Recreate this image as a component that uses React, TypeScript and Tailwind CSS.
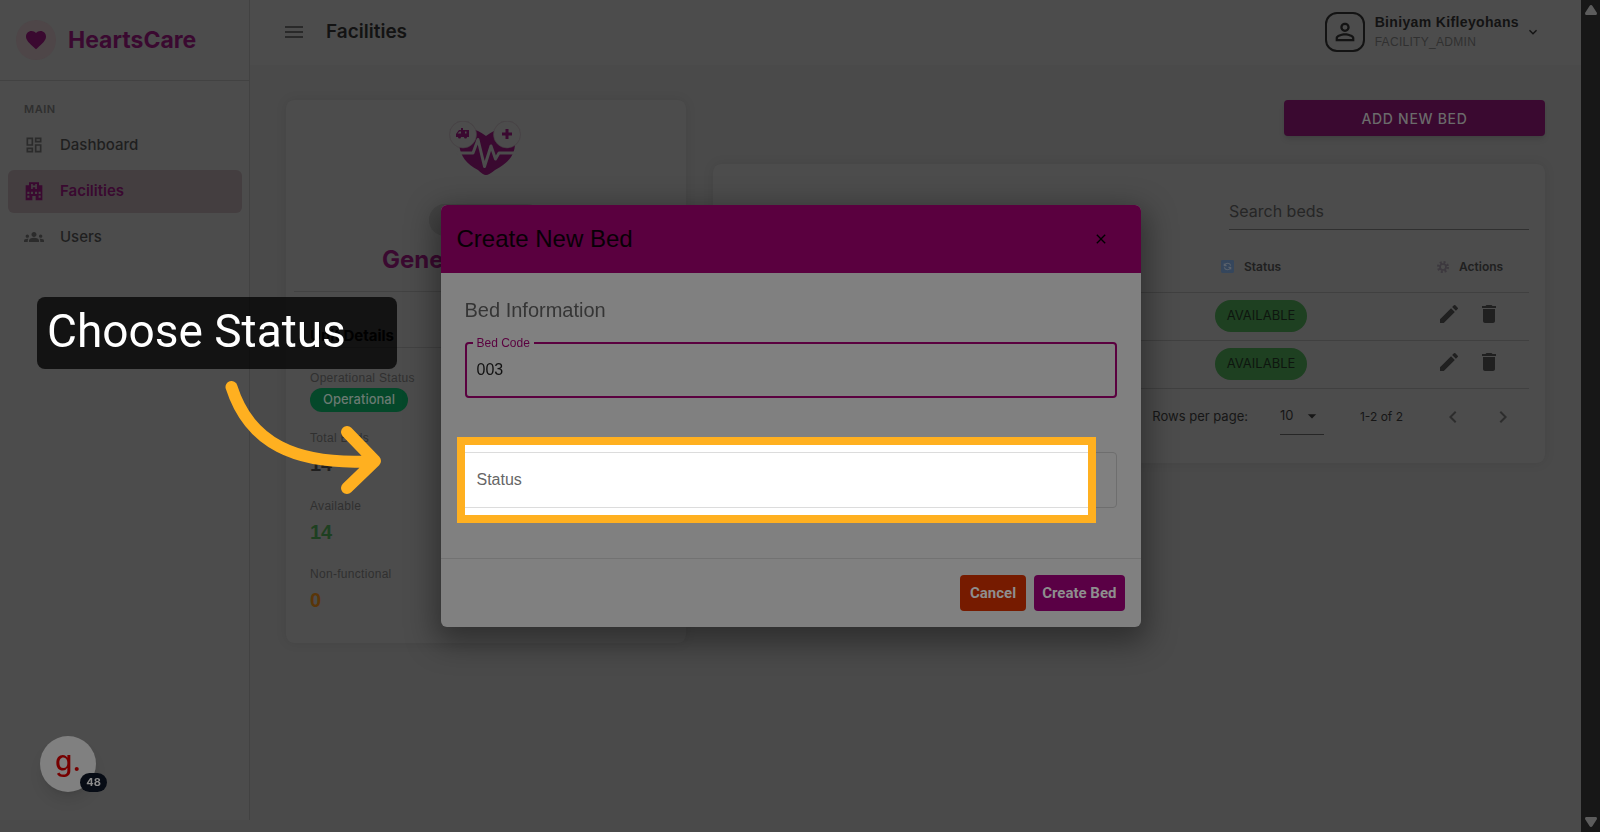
import { useState } from 'react'
import {
  MdClose,
  MdDelete,
  MdEdit,
  MdFavorite,
  MdGroups,
  MdKeyboardArrowDown,
  MdMenu,
  MdOutlineDashboard,
  MdPersonOutline,
  MdChevronLeft,
  MdChevronRight,
  MdArrowDropDown,
} from 'react-icons/md'
import { clsx } from 'clsx'

const HospitalIcon = () => (
  <svg viewBox="0 0 24 24" className="size-5" fill="currentColor">
    <path
      fillRule="evenodd"
      d="M18 5V1.500H6V5H2v18h8v-5h4v5h8V5zM6.500 20H4V17.500h2.500zM6.500 15.500H4V13h2.500zM10.800 15.500H8.300V13h2.500zM15.700 15.500h-2.500V13h2.500zM20 20h-2.500v-2.500H20zM20 15.500h-2.500V13H20zM8.500 3.500h2v2h3v-2h2v6h-2v-2h-3v2h-2z"
    />
  </svg>
)

const menu = [
  { name: 'Dashboard', icon: <MdOutlineDashboard className="size-5" /> },
  { name: 'Facilities', icon: <HospitalIcon /> },
  { name: 'Users', icon: <MdGroups className="size-5" /> },
]

const stats = [
  { label: 'Total Beds', value: '14', color: 'text-[#1f1f1f]' },
  { label: 'Available', value: '14', color: 'text-[#1e4021]' },
  { label: 'Non-functional', value: '0', color: 'text-[#5a3508]' },
]

function Sidebar() {
  return (
    <aside className="mb-3 w-[250px] shrink-0 border-r border-[#424242] bg-[#4c4c4c]">
      <div className="flex h-[81px] items-center gap-3 border-b border-[#424242] px-4">
        <span className="flex size-10 items-center justify-center rounded-full bg-[#4e4648]">
          <MdFavorite className="size-6 text-[#3a0930]" />
        </span>
        <span className="text-[23px] font-bold text-[#3a0930]">HeartsCare</span>
      </div>
      <p className="px-6 pt-5 text-[11px] leading-4 font-semibold tracking-wider text-[#2f2f2f]">MAIN</p>
      <nav className="mt-[7px] flex flex-col gap-[3px] pr-[7px] pl-2">
        {menu.map((item) => (
          <a
            key={item.name}
            href="#"
            className={clsx(
              'flex h-[43px] items-center gap-4 rounded-md px-4 text-[15px]',
              item.name === 'Facilities'
                ? 'bg-[#443e40] font-semibold text-[#3a0930]'
                : 'font-medium text-[#1f1f1f]'
            )}
          >
            <span className={clsx('pb-0.5', item.name !== 'Facilities' && 'text-[#2b2b2b]')}>{item.icon}</span>
            {item.name}
          </a>
        ))}
      </nav>
    </aside>
  )
}

function Header() {
  return (
    <header className="flex h-[65px] items-center bg-[#4c4c4c] pr-10 pb-0.5 pl-8">
      <button aria-label="Toggle menu" className="text-[#292929]">
        <MdMenu className="size-6" />
      </button>
      <h1 className="ml-5 pt-0.5 text-[19px] font-semibold text-[#131313]">Facilities</h1>
      <button className="ml-auto flex items-center text-left font-['Liberation_Sans',Arial,sans-serif]">
        <span className="flex size-10 items-center justify-center rounded-xl border-2 border-[#131313]">
          <MdPersonOutline className="size-7 text-[#131313]" />
        </span>
        <span className="ml-2.5 flex flex-col">
          <span className="text-[14px] leading-5 font-bold tracking-wide text-[#131313]">Biniyam Kifleyohans</span>
          <span className="text-[12px] leading-5 tracking-wide text-[#303030]">FACILITY_ADMIN</span>
        </span>
        <MdKeyboardArrowDown className="ml-1.5 size-4 text-[#131313]" />
      </button>
    </header>
  )
}

function HeartBeat() {
  return (
    <svg width="74" height="58" viewBox="0 0 74 58" fill="none">
      <path
        d="M10 22C10 12 20 6 29 10Q33 12 37 15Q41 12 45 10C55 6 66 12 66 22C66 36 57 43 46 49Q40 54 37 54Q34 54 29 49C18 43 11 36 10 22Z"
        fill="#3a0930"
      />
      <path
        d="M9 32H24L29 18.500L35.500 45.500L42 25L46.500 38L50 32H66"
        stroke="#4c4c4c"
        strokeWidth="3"
        strokeLinecap="round"
        strokeLinejoin="round"
      />
      <circle cx="14" cy="13.500" r="13.500" fill="#4c4c4c" stroke="#443c42" strokeWidth="0.600" />
      <circle cx="58" cy="13.500" r="13.500" fill="#4c4c4c" stroke="#443c42" strokeWidth="0.600" />
      <path d="M58 8V18M53 13H63" stroke="#3a0930" strokeWidth="3" />
      <path d="M7 13L10 9H12V7H14V9H20V16H18A1.500 1.500 0 0 1 15 16H12A1.500 1.500 0 0 1 9 16H7Z" fill="#3a0930" />
      <path d="M8.500 12.500L10.500 10.500H12V12.500ZM16 10.500H17.500V12.500H16Z" fill="#4c4c4c" />
    </svg>
  )
}

function FacilityCard() {
  return (
    <section className="h-[543px] rounded-lg bg-[#4c4c4c] px-2 shadow-[0_0_12px_#00000014]">
      <div className="flex flex-col items-center pt-[21px]">
        <HeartBeat />
        <div className="mt-[25px] h-8 w-[114px] rounded-full bg-[#444444]" />
      </div>
      <h2 className="mt-1 pl-[88px] text-[24px] leading-[40px] font-bold text-[#3a0930]">General</h2>
      <div className="mt-[11px] border-y border-[#424242] pt-8 pl-4">
        <h3 className="text-[15px] leading-[23px] font-bold text-black">Unit Details</h3>
      </div>
      <div className="px-4 pt-5 font-['Liberation_Sans',Arial,sans-serif]">
        <p className="text-[12px] leading-5 tracking-wide text-[#303030]">Operational Status</p>
        <span className="flex h-6 w-[98px] items-center justify-center rounded-full bg-[#05482a] font-[Inter,sans-serif] text-[13px] font-medium text-[#6a7a72]">
          Operational
        </span>
        {stats.map((stat) => (
          <div key={stat.label} className="pt-4">
            <p className="text-[12px] leading-5 tracking-wide text-[#303030]">{stat.label}</p>
            <p className={clsx('text-[20px] leading-8 font-bold', stat.color)}>{stat.value}</p>
          </div>
        ))}
      </div>
    </section>
  )
}

function BedsTable() {
  return (
    <section className="mt-7 h-[299px] rounded-lg bg-[#4c4c4c] px-4 pt-7 shadow-[0_0_12px_#00000014]">
      <input
        type="search"
        aria-label="Search beds"
        placeholder="Search beds"
        className="ml-auto block h-[38px] w-[300px] border-b border-[#303030] text-[16px] outline-none placeholder:text-[#262626]"
      />
      <table className="w-full table-fixed text-left">
        <thead>
          <tr className="h-[62px] border-b border-[#404040] text-[12px] text-[#202020]">
            <th />
            <th className="w-[200px] pt-3 pl-2 font-semibold">
              <span className="flex items-center gap-2.5">
                <svg viewBox="0 0 14 14" className="size-[13px]">
                  <rect width="14" height="14" rx="1.500" fill="#35465c" />
                  <path
                    d="M3.500 6.500V3.800M3.500 6H6M4 5.500A3.500 3.500 0 0 1 10.500 6M10.500 7.500V10.200M10.500 8H8M10 8.500A3.500 3.500 0 0 1 3.500 8"
                    stroke="#5a626c"
                    strokeWidth="1.200"
                    fill="none"
                  />
                </svg>
                Status
              </span>
            </th>
            <th className="w-[116px] pt-3 pl-6 font-semibold">
              <span className="flex items-center gap-2.5">
                <svg viewBox="0 0 14 14" className="size-3">
                  <circle cx="7" cy="7" r="5.500" stroke="#3d393f" strokeWidth="3" strokeDasharray="2.200 2.120" fill="none" />
                  <circle cx="7" cy="7" r="3.500" stroke="#3d393f" strokeWidth="2" fill="none" />
                </svg>
                Actions
              </span>
            </th>
          </tr>
        </thead>
        <tbody>
          {[1, 2].map((row) => (
            <tr key={row} className="h-12 border-b border-[#404040]">
              <td />
              <td className="pl-0.5">
                <span className="flex h-8 w-[92px] items-center justify-center rounded-full bg-[#1e4021] text-[13px] text-[#0e160f]">
                  AVAILABLE
                </span>
              </td>
              <td className="pb-1 pl-6">
                <span className="flex items-center gap-4 text-[#202020]">
                  <button aria-label="Edit bed">
                    <MdEdit className="size-6" />
                  </button>
                  <button aria-label="Delete bed">
                    <MdDelete className="size-6" />
                  </button>
                </span>
              </td>
            </tr>
          ))}
        </tbody>
      </table>
      <div className="flex h-14 items-center justify-end pr-3.5 text-[12px] text-[#161616]">
        <label htmlFor="rows" className="text-[13px]">
          Rows per page:
        </label>
        <span className="relative ml-8 border-b border-[#262626]">
          <select id="rows" className="h-9 w-11 appearance-none text-[13px] outline-none">
            <option>10</option>
          </select>
          <MdArrowDropDown className="pointer-events-none absolute top-2 right-0.5 size-5" />
        </span>
        <span className="ml-9">1-2 of 2</span>
        <button aria-label="Previous page" className="ml-[38px] text-[#2d2d2d]">
          <MdChevronLeft className="size-6" />
        </button>
        <button aria-label="Next page" className="ml-[26px] text-[#2d2d2d]">
          <MdChevronRight className="size-6" />
        </button>
      </div>
    </section>
  )
}

function CreateBedDialog() {
  const [code, setCode] = useState('003')

  return (
    <div
      role="dialog"
      aria-label="Create New Bed"
      className="w-[700px] rounded-md bg-[#808080] font-['Liberation_Sans',Arial,sans-serif] shadow-[0_10px_30px_6px_#00000060]"
    >
      <div className="flex h-[68px] items-center justify-between rounded-t-md bg-[#5a003f] pr-8 pl-4">
        <h2 className="text-[24px] text-[#080006]">Create New Bed</h2>
        <button aria-label="Close" className="text-black">
          <MdClose className="size-4" />
        </button>
      </div>
      <div className="px-6 pt-[21px] pb-[50px]">
        <h3 className="text-[20px] leading-8 text-[#353535]">Bed Information</h3>
        <fieldset className="mt-[11px] h-[61px] rounded border-2 border-[#5a003f] px-1.5">
          <legend className="px-1 text-[12px] leading-3 text-[#5a003f]">
            <label htmlFor="code">Bed Code</label>
          </legend>
          <input
            id="code"
            value={code}
            onChange={(e) => setCode(e.target.value)}
            className="h-[42px] w-full px-1 text-[16px] text-[#111111] outline-none"
          />
        </fieldset>
        <div className="relative mt-[54px]">
          <select id="status" className="block h-14 w-full appearance-none rounded border border-[#6e6e6e] outline-none" />
          {/* Spotlight around the field */}
          <div className="pointer-events-none absolute -inset-y-[15px] right-[21px] -left-2 border-8 border-[#ffb020] bg-white py-[7px]">
            <div className="flex h-full items-center border-y border-[#dcdcdc] pl-3">
              <label htmlFor="status" className="text-[16px] text-[#666666]">
                Status
              </label>
            </div>
          </div>
        </div>
      </div>
      <div className="flex justify-end gap-2 border-t border-[#727272] p-4 font-[Roboto,sans-serif] text-[15px] font-bold text-[#8e8e8e]">
        <button className="h-9 rounded bg-[#761b00] px-2.5">Cancel</button>
        <button className="h-9 rounded bg-[#5a0045] px-2">Create Bed</button>
      </div>
    </div>
  )
}

export default function App() {
  return (
    <div className="flex min-h-screen bg-[#4a4a4a] font-[Inter,sans-serif]">
      <Sidebar />
      <div className="min-w-0 flex-1">
        <Header />
        <main className="grid grid-cols-[400px_1fr] gap-[27px] pt-[35px] pr-9 pl-9">
          <FacilityCard />
          <div>
            <button className="ml-auto block h-9 w-[261px] rounded bg-[#3a0930] text-[14px] font-medium tracking-wider text-[#6b6b6b] shadow-md">
              ADD NEW BED
            </button>
            <BedsTable />
          </div>
        </main>
      </div>
      <div className="flex w-[19px] shrink-0 flex-col items-center justify-between bg-[#171717] py-[5px] text-[#5c5c5c]">
        <svg viewBox="0 0 12 10" className="h-2.5 w-3" fill="currentColor">
          <path d="M6 0Q7 0 7.500 1L12 8Q12 10 11 10H1Q0 10 0 8L4.500 1Q5 0 6 0Z" />
        </svg>
        <svg viewBox="0 0 12 10" className="h-2.5 w-3 rotate-180" fill="currentColor">
          <path d="M6 0Q7 0 7.500 1L12 8Q12 10 11 10H1Q0 10 0 8L4.500 1Q5 0 6 0Z" />
        </svg>
      </div>

      <div className="fixed inset-y-0 right-[19px] left-0 flex items-center justify-center">
        <CreateBedDialog />
      </div>

      {/* Step caption and arrow */}
      <div className="fixed top-[297px] left-[37px] h-[72px] w-[360px] rounded-lg bg-black/75 px-2.5 font-[Roboto,sans-serif] text-[46px] leading-[68px] text-white">
        Choose Status
      </div>
      <svg className="fixed top-[376px] left-[220px]" width="170" height="125" viewBox="220 376 170 125" fill="none">
        <path
          d="M231.500 387C249 442 294 466 374 461M347 432L375 461L347 488"
          stroke="#ffb020"
          strokeWidth="12"
          strokeLinecap="round"
          strokeLinejoin="round"
        />
      </svg>

      <button className="fixed bottom-10 left-10 flex size-14 items-center justify-center rounded-full bg-[#808080] text-[28px] leading-none font-medium text-[#760000] shadow-lg">
        <span className="pb-1.5">g.</span>
        <span className="absolute -right-[11px] bottom-0 flex h-[19px] w-[27px] items-center justify-center rounded-full bg-[#070c15] text-[11px] font-bold text-[#8c8c8c]">
          48
        </span>
      </button>
    </div>
  )
}
